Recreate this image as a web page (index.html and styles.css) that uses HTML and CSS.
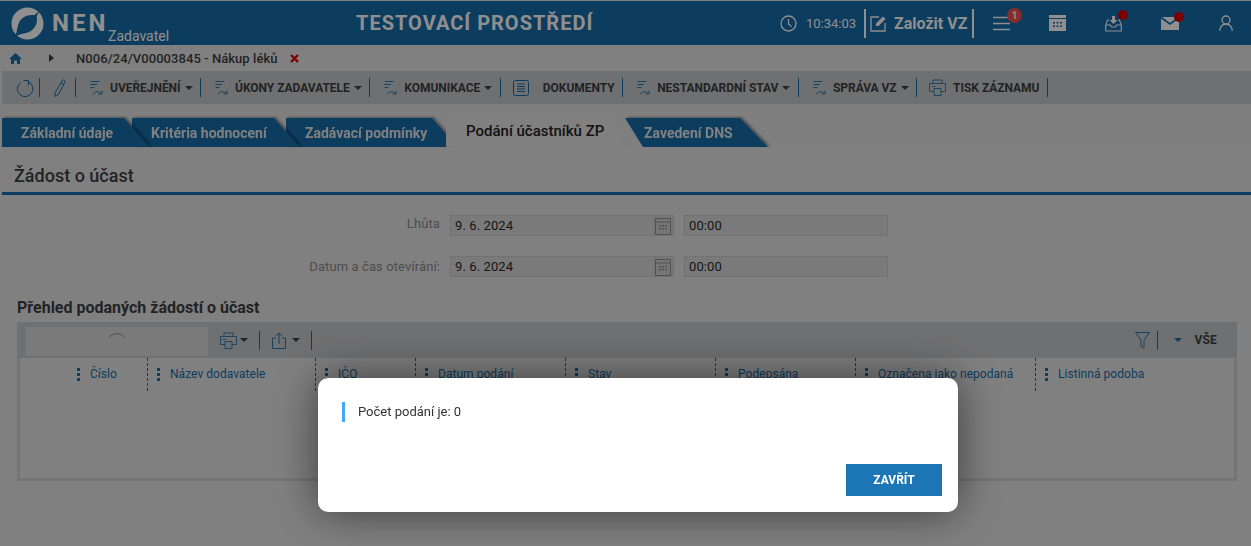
FILE: index.html
```html
<!DOCTYPE html>
<html lang="cs">
<head>
<meta charset="utf-8">
<title>NEN Zadavatel</title>
<link rel="stylesheet" href="styles.css">
</head>
<body>
<svg class="defs" width="0" height="0" aria-hidden="true">
  <symbol id="i-flow" viewBox="0 0 14 18"><path d="M.5 2.500h9M.5 5.500h6.500M.5 8.500h4M3 15.500c1.500-3.500 6-3.500 8.500-1M12 11.500v3.500H8.500" fill="none" stroke="currentColor" stroke-width=".9"/></symbol>
  <symbol id="i-print" viewBox="0 0 17 17"><path d="M4 4.500V1h9v3.500M5 12.500H.5v-8h16v8H12M5 9.500h7v7H5zM3 7.500h3.500" fill="none" stroke="currentColor" stroke-width=".8"/></symbol>
  <symbol id="i-cal" viewBox="0 0 16 18"><path d="M.5 1.500h15v16H.5zM.5 5h15" fill="none" stroke="currentColor"/><path d="M4 8h2v1.500H4zM7 8h2v1.500H7zM10 8h2v1.500h-2zM4 11h2v1.500H4zM7 11h2v1.500H7zM10 11h2v1.500h-2z" fill="currentColor"/></symbol>
</svg>
<div class="page">
  <header class="top">
    <div class="logo">
      <svg class="logo-mark" width="33" height="33" viewBox="0 0 34 34"><circle cx="17" cy="17" r="16.500" fill="#fff"/><path d="M4 31C6 28 6 22 7.500 18 10 10 18 7.500 24 8.500 26 7 28 5 30 3 28 6 27 8 26.500 10 28 17 24 24 16.500 26.500 12 27.500 8 28 4 31z" fill="#176ba8"/></svg>
      <span class="logo-nen">NEN</span>
      <span class="logo-role">Zadavatel</span>
    </div>
    <div class="env">TESTOVACÍ PROSTŘEDÍ</div>
    <div class="top-right">
      <svg class="clock" width="17" height="17" viewBox="0 0 17 17"><circle cx="8.500" cy="8.500" r="7.500" fill="none" stroke="#fff" stroke-width="1.300"/><path d="M8.500 4v5l3 2.500" fill="none" stroke="#fff" stroke-width="1.300"/></svg>
      <span class="time">10:34:03</span>
      <div class="create">
        <svg width="17" height="17" viewBox="0 0 17 17"><path d="M9 2H1v14h14V8" fill="none" stroke="#fff" stroke-width="1.300"/><path d="M6 8.500l7-7 2.500 2.500-7 7H6z" fill="#fff"/></svg>
        <span>Založit VZ</span>
      </div>
      <div class="tool tool-menu">
        <svg width="17" height="15" viewBox="0 0 17 15"><path d="M0 1.500h17M0 7.500h17M0 13.500h17" stroke="#fff" stroke-width="1.300"/></svg>
        <span class="badge">1</span>
      </div>
      <div class="tool tool-cal">
        <svg width="17" height="16" viewBox="0 0 17 16"><path fill="#fff" d="M0 0h17v3H0zM0 4h17v12H0z"/><path d="M4 7h2v1.500H4zM7.500 7h2v1.500h-2zM11 7h2v1.500h-2zM4 10.500h2V12H4zM7.500 10.500h2V12h-2zM11 10.500h2V12h-2z" fill="#176ba8"/></svg>
      </div>
      <div class="tool tool-inbox">
        <svg width="17" height="17" viewBox="0 0 17 17"><path d="M4 5H2.500L.7 10v6h15.600v-6L14.500 5H13M.7 10h4.800l1 2h4l1-2h4.800" fill="none" stroke="#fff" stroke-width="1.100"/><path d="M7 1h3v4h2.500l-4 4-4-4H7z" fill="#fff"/></svg>
        <span class="dot"></span>
      </div>
      <div class="tool tool-mail">
        <svg width="18" height="13" viewBox="0 0 18 13"><path d="M0 1.500V13h18V1.500L9 8z" fill="#fff"/><path d="M1 0h16L9 6z" fill="#fff"/></svg>
        <span class="dot dot-mail"></span>
      </div>
      <div class="tool tool-user">
        <svg width="14" height="16" viewBox="0 0 14 16"><circle cx="7" cy="5" r="4" fill="none" stroke="#fff" stroke-width="1.300"/><path d="M.8 16c0-4 2.500-7 6.200-7s6.200 3 6.200 7" fill="none" stroke="#fff" stroke-width="1.300"/></svg>
      </div>
    </div>
  </header>

  <nav class="crumbs">
    <svg class="home" width="13" height="11" viewBox="0 0 13 11"><path d="M6.500 0L13 6h-2v5H8V7.500H5V11H2V6H0z" fill="#176ba8"/></svg>
    <span class="crumb-arrow"></span>
    <span class="crumb-text">N006/24/V00003845 - Nákup léků</span>
    <svg width="9" height="9" viewBox="0 0 9 9"><path d="M1 1l7 7M8 1L1 8" stroke="#e00000" stroke-width="2.400"/></svg>
  </nav>

  <div class="toolbar">
    <svg class="ic-undo" width="18" height="18" viewBox="0 0 18 18"><path d="M12 2.500A7.800 7.800 0 1 1 4.500 3.500M7.500 1.500H12.500V6.500" fill="none" stroke="currentColor" stroke-width="1"/></svg>
    <i class="sep sep-a"></i>
    <svg class="ic-pen" width="12" height="18" viewBox="0 0 12 18"><path d="M8.500 1.200c1-.8 2.800.2 2.500 1.600L4.500 15.500 1.300 17.500 1 13.800zM7 4l3 1.800" fill="none" stroke="currentColor" stroke-width="1"/></svg>
    <i class="sep sep-b"></i>
    <div class="tb-item"><svg class="flow" width="14" height="18"><use href="#i-flow"/></svg><b>UVEŘEJNĚNÍ</b><span class="caret"></span></div><i class="sep"></i>
    <div class="tb-item"><svg class="flow" width="14" height="18"><use href="#i-flow"/></svg><b>ÚKONY ZADAVATELE</b><span class="caret"></span></div><i class="sep"></i>
    <div class="tb-item"><svg class="flow" width="14" height="18"><use href="#i-flow"/></svg><b>KOMUNIKACE</b><span class="caret"></span></div><i class="sep"></i>
    <div class="tb-item tb-doc"><svg width="16" height="16" viewBox="0 0 16 16"><rect x=".5" y=".5" width="15" height="15" rx="2" fill="none" stroke="currentColor"/><path d="M4 4h8M4 6.500h8M4 9h8M4 11.500h8" stroke="currentColor"/></svg><b>DOKUMENTY</b></div><i class="sep"></i>
    <div class="tb-item"><svg class="flow" width="14" height="18"><use href="#i-flow"/></svg><b>NESTANDARDNÍ STAV</b><span class="caret"></span></div><i class="sep"></i>
    <div class="tb-item"><svg class="flow" width="14" height="18"><use href="#i-flow"/></svg><b>SPRÁVA VZ</b><span class="caret"></span></div><i class="sep"></i>
    <div class="tb-item tb-print"><svg width="17" height="17"><use href="#i-print"/></svg><b>TISK ZÁZNAMU</b></div><i class="sep"></i>
  </div>

  <ul class="tabs">
    <li class="tab tab-1"><span>Základní údaje</span></li>
    <li class="tab tab-2"><span>Kritéria hodnocení</span></li>
    <li class="tab tab-3"><span>Zadávací podmínky</span></li>
    <li class="tab tab-active"><span>Podání účastníků ZP</span></li>
    <li class="tab tab-5"><span>Zavedení DNS</span></li>
  </ul>

  <h1 class="section-title">Žádost o účast</h1>

  <div class="form">
    <div class="form-row">
      <label class="form-label form-label-up">Lhůta</label>
      <div class="field field-date"><span>9. 6. 2024</span><span class="cal"><svg width="16" height="18"><use href="#i-cal"/></svg></span></div>
      <div class="field field-time"><span>00:00</span></div>
    </div>
    <div class="form-row">
      <label class="form-label">Datum a čas otevírání:</label>
      <div class="field field-date"><span>9. 6. 2024</span><span class="cal"><svg width="16" height="18"><use href="#i-cal"/></svg></span></div>
      <div class="field field-time"><span>00:00</span></div>
    </div>
  </div>

  <h2 class="grid-title">Přehled podaných žádostí o účast</h2>

  <section class="grid">
    <div class="grid-bar">
      <div class="search">
        <svg width="18" height="6" viewBox="0 0 18 6"><path d="M1 5.500C5 .5 13 .5 17 5.500" fill="none" stroke="#8a8a8a" stroke-width="1"/></svg>
      </div>
      <svg class="gb-print" width="17" height="17"><use href="#i-print"/></svg>
      <span class="caret gb-caret"></span>
      <i class="gsep"></i>
      <svg class="gb-share" width="14" height="17" viewBox="0 0 14 17"><path d="M4 6H.5v10.500h13V6H10M7 12V1M4 4l3-3 3 3" fill="none" stroke="currentColor" stroke-width=".9"/></svg>
      <span class="caret gb-caret gb-caret-share"></span>
      <i class="gsep"></i>
      <svg class="gb-filter" width="15" height="17" viewBox="0 0 15 17"><path d="M.5.500h14L9 8v8l-3-1.500V8z" fill="none" stroke="currentColor" stroke-width=".9"/></svg>
      <i class="gsep gsep-right"></i>
      <span class="caret caret-blue"></span>
      <b class="all">VŠE</b>
    </div>
    <div class="grid-head">
      <div class="col col-1"><i class="dots"></i>Číslo</div>
      <div class="col"><i class="dots"></i>Název dodavatele</div>
      <div class="col"><i class="dots"></i>IČO</div>
      <div class="col"><i class="dots"></i>Datum podání</div>
      <div class="col"><i class="dots"></i>Stav</div>
      <div class="col"><i class="dots"></i>Podepsána</div>
      <div class="col"><i class="dots"></i>Označena jako nepodaná</div>
      <div class="col"><i class="dots"></i>Listinná podoba</div>
    </div>
  </section>
</div>

<div class="overlay">
  <div class="dialog">
    <p class="message">Počet podání je: 0</p>
    <div class="actions"><button class="close" type="button">ZAVŘÍT</button></div>
  </div>
</div>
</body>
</html>
```
FILE: styles.css
```css
* { box-sizing: border-box; }
html, body { margin: 0; height: 100%; overflow: hidden; }
body { background: #e5e5e5; font-family: Roboto, "Liberation Sans", sans-serif; color: #3c3f42; }
.defs { position: absolute; }
.page { height: 546px; padding-top: 1px; }

.top { height: 44px; background: #176ba8; color: #fff; display: flex; align-items: center; }
.logo { width: 356px; flex: none; display: flex; align-items: center; height: 100%; position: relative; padding-left: 11px; }
.logo-mark { flex: none; margin-top: 0; }
.logo-nen { font-weight: 700; font-size: 24px; letter-spacing: 3px; margin-left: 8px; margin-top: -1px; }
.logo-role { position: absolute; left: 108px; top: 27px; font-size: 14px; line-height: 16px; }
.env { font-weight: 700; font-size: 20px; letter-spacing: 1px; white-space: nowrap; width: 424px; flex: none; }
.top-right { display: flex; align-items: center; height: 100%; }
.clock { margin-right: 9px; }
.time { font-size: 13px; width: 58px; }
.create { display: flex; align-items: center; gap: 7px; height: 29px; width: 110px; border: solid #fff; border-width: 0 2px; padding-left: 4px; font-size: 16px; font-weight: 700; white-space: nowrap; }
.tool { position: relative; display: flex; }
.tool-menu { margin-left: 19px; }
.tool-cal { margin-left: 39px; }
.tool-inbox { margin-left: 39px; }
.tool-mail { margin-left: 39px; }
.tool-user { margin-left: 40px; }
.badge { position: absolute; left: 14px; top: -8px; width: 15px; height: 15px; border-radius: 50%; background: #f04f4a; font-size: 10px; font-weight: 700; line-height: 15px; text-align: center; }
.dot { position: absolute; right: -6px; top: -5px; width: 10px; height: 10px; border-radius: 50%; background: #da0000; }
.dot-mail { right: -5px; }

.crumbs { height: 26px; display: flex; align-items: center; padding-left: 9px; font-size: 13px; font-weight: 500; }
.crumb-arrow { width: 0; height: 0; border-left: 5px solid #3c3f42; border-top: 4px solid transparent; border-bottom: 4px solid transparent; margin: 0 22px 0 27px; }
.crumb-text { margin-right: 12px; letter-spacing: .06px; }

.toolbar { height: 33px; margin-left: 2px; background: #c7c8ca; display: flex; align-items: center; color: #176ba8; padding-left: 14px; }
.sep { display: block; width: 1px; height: 19px; background: #176ba8; flex: none; }
.ic-undo { flex: none; }
.sep-a { margin-left: 5px; }
.ic-pen { margin-left: 14px; flex: none; }
.sep-b { margin-left: 9px; }
.tb-item { display: flex; align-items: center; padding: 0 7.500px 0 14px; flex: none; }
.tb-item b { font-size: 12px; font-weight: 700; color: #3c3f42; margin-left: 6px; white-space: nowrap; letter-spacing: -.03px; }
.caret { display: inline-block; width: 0; height: 0; border-top: 4.500px solid #3c3f42; border-left: 4px solid transparent; border-right: 4px solid transparent; margin-left: 4px; flex: none; }
.tb-doc { padding-left: 12px; }
.tb-doc b { margin-left: 14px; }
.tb-print { padding-left: 12px; }
.tb-print b { margin-left: 7px; }

.tabs { list-style: none; margin: 0; padding: 14px 0 0 2px; height: 43px; display: flex; background: #e2e2e2; }
.tab { position: relative; height: 29px; font-size: 14px; font-weight: 700; color: #e5e5e5; filter: drop-shadow(2px -1px 1px rgba(0,0,0,.35)); }
.tab span { display: block; height: 100%; background: #176ba8; line-height: 30px; padding-left: 19px; clip-path: polygon(0 0, calc(100% - 26px) 0, 100% 100%, 0 100%); }
.tab-1 { width: 148px; z-index: 5; }
.tab-2 { width: 168px; margin-left: -18px; z-index: 4; }
.tab-3 { width: 172px; margin-left: -14px; z-index: 3; }
.tab-active { width: 179px; height: 30px; margin: -1px 0 0 -12px; color: #222; font-weight: 500; z-index: 6; filter: none; }
.tab-active span { background: #e5e5e5; color: #222; line-height: 29px; padding-left: 20px; font-size: 15px; clip-path: polygon(0 0, calc(100% - 12px) 0, 100% 100%, 0 100%); white-space: nowrap; }
.tab-5 { width: 143px; z-index: 1; }
.tab-5 span { clip-path: polygon(0 0, calc(100% - 28px) 0, 100% 100%, 18px 100%); }

.section-title { margin: 0 0 0 2px; height: 48px; border-bottom: 3px solid #176ba8; font-size: 18px; font-weight: 500; color: #3c3f42; padding: 18px 0 0 12px; line-height: 22px; }

.form { padding-top: 20px; }
.form-row { display: flex; align-items: flex-start; height: 41px; }
.form-label { width: 440px; text-align: right; font-size: 13px; letter-spacing: .1px; line-height: 21px; color: #8a8a8a; flex: none; }
.form-label-up { margin-top: -2px; }
.field { height: 21px; background: #d9d9d9; border: 1px dotted #bdbdbd; font-size: 13px; color: #2b2b2b; display: flex; align-items: center; padding-left: 4px; flex: none; position: relative; letter-spacing: .1px; }
.field-date { width: 224px; margin-left: 10px; justify-content: space-between; padding-right: 0; }
.field-time { width: 204px; margin-left: 10px; }
.cal { width: 20px; height: 100%; display: flex; align-items: center; justify-content: center; color: #8f8f8f; background: #d2d2d2; }

.grid-title { margin: 0 0 0 17px; font-size: 16px; font-weight: 700; line-height: 20px; padding-top: 1px; color: #3c3f42; box-sizing: content-box; }
.grid { margin: 4px 14px 0 17px; height: 159px; border: 3px solid #d1d1d3; border-top: 0; }
.grid-bar { height: 36px; margin: 0 -3px; background: #c7c8ca; display: flex; align-items: center; color: #176ba8; padding: 0 20px 0 9px; }
.search { width: 182px; height: 29px; background: #d9d9d9; display: flex; justify-content: center; padding-top: 5px; margin: 0 12px 2px 0; flex: none; align-self: flex-end; }
.gb-caret { margin-left: 3px; }
.gb-caret-share { margin-left: 6px; }
.gb-share { margin-left: 1px; flex: none; }
.gsep { display: block; width: 1px; height: 19px; background: #176ba8; margin: 0 11px; flex: none; }
.gb-filter { margin-left: auto; flex: none; margin-right: 7px; }
.gsep-right { margin: 0 16px 0 0; }
.caret-blue { border-top-color: #176ba8; margin: 0 12px 0 0; }
.all { font-size: 12px; color: #3c3f42; letter-spacing: .2px; }
.grid-head { display: grid; grid-template-columns: 128px 168px 100px 150px 150px 140px 180px 140px 1fr; height: 33px; font-size: 12px; color: #176ba8; letter-spacing: .04px; }
.col { position: relative; display: flex; align-items: center; padding-bottom: 1px; border-right: 1px dashed #176ba8; padding-left: 9px; white-space: nowrap; }
.col:last-child { border-right: 0; }
.col-1 { padding-left: 57px; }
.dots { width: 3px; height: 13px; margin-right: 10px; flex: none; background: radial-gradient(circle at 1.500px 1.500px, #176ba8 1.400px, transparent 1.600px) 0 0 / 3px 5px repeat-y; }

.overlay { position: fixed; inset: 0; z-index: 10; background: rgba(0,0,0,.44); }
.dialog { position: absolute; left: 318px; top: 378px; width: 640px; height: 134px; background: #fff; border-radius: 10px; box-shadow: 0 0 45px rgba(0,0,0,.55); padding: 24px 16px 16px 24px; display: flex; flex-direction: column; }
.message { margin: 0; height: 20px; border-left: 3px solid #3fa9f5; padding-left: 13px; font-size: 13px; line-height: 20px; color: #333; }
.actions { margin-top: auto; display: flex; justify-content: flex-end; }
.close { width: 96px; height: 32px; border: 0; background: #1c75b5; color: #fff; font: 700 12px Roboto, sans-serif; padding: 0; }
```
